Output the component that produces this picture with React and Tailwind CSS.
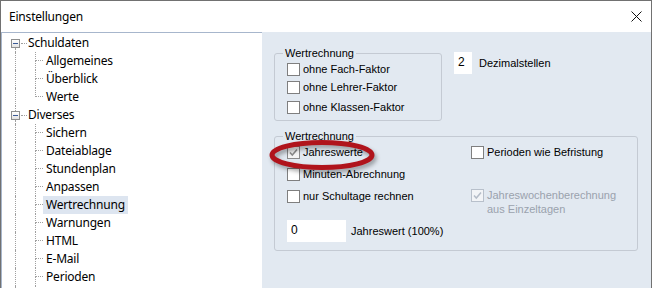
import React from "react";

const uiFont = { fontFamily: '"Noto Sans", "Open Sans", sans-serif' };

function TopNode({ label, first }) {
  return (
    <div className="flex h-[18px] items-center">
      <div className="w-[9px] shrink-0" />
      <div className="flex h-full w-[9px] shrink-0 flex-col">
        <div className={first ? "mx-auto w-0 flex-1" : "mx-auto w-0 flex-1 border-l border-dotted border-[#a0a0a0]"} />
        <div className="flex h-[9px] w-[9px] items-center justify-center border border-[#8e8f8f] bg-gradient-to-b from-white to-[#e3e3e3]">
          <div className="h-px w-[5px] bg-[#3a5a96]" />
        </div>
        <div className="mx-auto w-0 flex-1 border-l border-dotted border-[#a0a0a0]" />
      </div>
      <div className="ml-px h-0 w-[6px] border-t border-dotted border-[#a0a0a0]" />
      <span className="ml-px text-[12px] leading-none tracking-[-0.2px] text-black">{label}</span>
    </div>
  );
}

function ChildNode({ label, last, selected }) {
  return (
    <div className="flex h-[18px]">
      <div className="w-[13px] shrink-0" />
      <div className="w-[20px] shrink-0 border-l border-dotted border-[#a0a0a0]" />
      <div className="flex w-[8px] shrink-0 flex-col">
        <div className="h-[9px] border-b border-l border-dotted border-[#a0a0a0]" />
        <div className={last ? "flex-1" : "flex-1 border-l border-dotted border-[#a0a0a0]"} />
      </div>
      <span
        className={
          selected
            ? "flex items-center bg-[#dde5f0] px-[3px] text-[12px] leading-none tracking-[-0.2px] text-black"
            : "flex items-center px-[3px] text-[12px] leading-none tracking-[-0.2px] text-black"
        }
      >
        {label}
      </span>
    </div>
  );
}

function Check({ checked, disabled, label, className = "" }) {
  return (
    <div className={`flex items-start ${className}`}>
      <div
        className={
          disabled
            ? "mt-[1px] flex h-[13px] w-[13px] shrink-0 items-center justify-center border border-[#b8c0cb] bg-[#f2f4f7]"
            : checked
            ? "mt-[1px] flex h-[13px] w-[13px] shrink-0 items-center justify-center border border-[#8a8a8a] bg-[#f4f4f4]"
            : "mt-[1px] flex h-[13px] w-[13px] shrink-0 items-center justify-center border border-[#7f7f7f] bg-white"
        }
      >
        {checked && (
          <svg width="9" height="9" viewBox="0 0 9 9">
            <path
              d="M1 4.5 L3.3 7 L8 1.5"
              fill="none"
              stroke={disabled ? "#b4bcc8" : "#8a8a8a"}
              strokeWidth="1.5"
            />
          </svg>
        )}
      </div>
      <span className={disabled ? "ml-[3px] leading-[14px] text-[#9aa2ad]" : "ml-[3px] leading-[14px] text-black"}>
        {label}
      </span>
    </div>
  );
}

export default function App() {
  return (
    <div
      className="flex h-[288px] w-[652px] flex-col overflow-hidden border border-b-0 border-[#717171] bg-white"
      style={uiFont}
    >
      {/* title bar */}
      <div className="flex h-[31px] shrink-0 items-center justify-between pl-[8px] pr-[9px]">
        <span className="text-[12px] tracking-[-0.2px] text-black">Einstellungen</span>
        <svg width="11" height="11" viewBox="0 0 11 11">
          <path d="M0.5 0.5 L10.5 10.5 M10.5 0.5 L0.5 10.5" stroke="#111" strokeWidth="1" />
        </svg>
      </div>

      <div className="flex min-h-0 flex-1">
        {/* tree */}
        <div className="w-[261px] shrink-0 overflow-hidden border-l border-t border-[#a7b6cc] bg-white pt-px">
          <TopNode label="Schuldaten" first />
          <ChildNode label="Allgemeines" />
          <ChildNode label="Überblick" />
          <ChildNode label="Werte" last />
          <TopNode label="Diverses" />
          <ChildNode label="Sichern" />
          <ChildNode label="Dateiablage" />
          <ChildNode label="Stundenplan" />
          <ChildNode label="Anpassen" />
          <ChildNode label="Wertrechnung" selected />
          <ChildNode label="Warnungen" />
          <ChildNode label="HTML" />
          <ChildNode label="E-Mail" />
          <ChildNode label="Perioden" />
          <ChildNode label="" />
        </div>

        {/* settings panel */}
        <div
          className="relative flex-1 bg-[#e2e9f1] pl-[12px] pt-[15px] text-[11px]"
          style={{ fontFamily: '"Liberation Sans", Arial, sans-serif' }}
        >
          <div className="flex items-start">
            <fieldset className="w-[168px] rounded-[3px] border border-[#c4cad3] pb-[4px] pl-[12px]">
              <legend className="ml-[-4px] px-[2px] leading-[13px] text-black">Wertrechnung</legend>
              <Check label="ohne Fach-Faktor" className="h-[18px] pt-[2px]" />
              <Check label="ohne Lehrer-Faktor" className="h-[18px] pt-[2px]" />
              <Check label="ohne Klassen-Faktor" className="mt-[2px] h-[18px] pt-[2px]" />
            </fieldset>
            <div className="ml-[12px] mt-[5px] flex h-[22px] w-[18px] items-start bg-white pl-[4px] pt-[3px] text-[12px] leading-[14px] text-black">
              2
            </div>
            <span className="ml-[7px] mt-[9px] leading-[14px] text-black">Dezimalstellen</span>
          </div>

          <fieldset className="mt-[9px] w-[364px] rounded-[3px] border border-[#c4cad3] pb-[8px] pl-[12px]">
            <legend className="ml-[-4px] px-[2px] leading-[13px] text-black">Wertrechnung</legend>
            <div className="grid grid-cols-[184px_1fr] items-start">
              <Check checked label="Jahreswerte" className="h-[18px] pt-[2px]" />
              <Check label="Perioden wie Befristung" className="h-[18px] pt-[2px]" />
              <Check label="Minuten-Abrechnung" className="mt-[4px] h-[18px] pt-[2px]" />
              <div />
              <Check label="nur Schultage rechnen" className="mt-[4px] h-[18px] pt-[2px]" />
              <Check
                checked
                disabled
                label={
                  <>
                    Jahreswochenberechnung
                    <br />
                    aus Einzeltagen
                  </>
                }
                className="mt-[3px] pt-[2px]"
              />
            </div>
            <div className="mt-[4px] flex items-center">
              <div className="flex h-[22px] w-[59px] items-start bg-white pl-[4px] pt-[3px] text-[12px] leading-[14px] text-black">
                0
              </div>
              <span className="ml-[5px] text-black">Jahreswert (100%)</span>
            </div>
          </fieldset>

          {/* red highlight ellipse */}
          <svg
            className="pointer-events-none absolute left-[6px] top-[107px] drop-shadow-[2px_3px_2px_rgba(0,0,0,0.35)]"
            width="110"
            height="34"
          >
            <ellipse cx="54" cy="16" rx="50" ry="12.5" fill="none" stroke="#b0141c" strokeWidth="5" />
          </svg>
        </div>
      </div>
    </div>
  );
}
